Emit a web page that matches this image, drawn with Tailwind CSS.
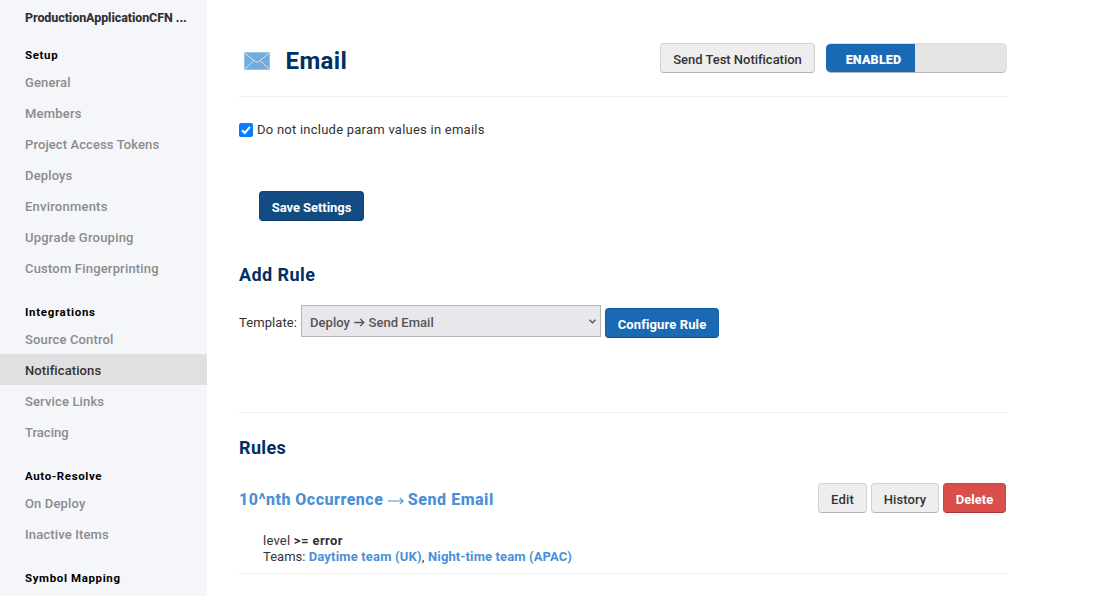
<!DOCTYPE html>
<html lang="en">
<head>
<meta charset="utf-8">
<title>Email notifications</title>
<script src="https://cdn.jsdelivr.net/npm/@tailwindcss/browser@4"></script>
</head>
<body class="flex h-[596px] overflow-hidden bg-white font-['Roboto','Liberation_Sans',sans-serif] text-[13px] text-[#333]">
<aside class="w-[207px] shrink-0 bg-[#f5f6fa] whitespace-nowrap font-medium tracking-[0.14px] text-[#8b8b8b]">
  <div class="h-[26px] pt-[10px] pl-[25px] text-[12.5px] leading-4 font-extrabold tracking-[-0.08px] text-[#333]">ProductionApplicationCFN ...</div>
  <h3 class="h-10 pt-[21px] pl-[25px] text-[11.5px] leading-4 font-bold tracking-[0.64px] text-black">Setup</h3>
  <a class="block h-[31px] pt-px pl-[25px] leading-[31px]">General</a>
  <a class="block h-[31px] pt-px pl-[25px] leading-[31px] tracking-[0.2px]">Members</a>
  <a class="block h-[31px] pt-px pl-[25px] leading-[31px] tracking-[0.1px]">Project Access Tokens</a>
  <a class="block h-[31px] pt-px pl-[25px] leading-[31px]">Deploys</a>
  <a class="block h-[31px] pt-px pl-[25px] leading-[31px] tracking-[0.22px]">Environments</a>
  <a class="block h-[31px] pt-px pl-[25px] leading-[31px] tracking-[0.22px]">Upgrade Grouping</a>
  <a class="block h-[31px] pt-px pl-[25px] leading-[31px] tracking-[0.19px]">Custom Fingerprinting</a>
  <h3 class="h-10 pt-[21px] pl-[25px] text-[11.5px] leading-4 font-bold tracking-[0.68px] text-black">Integrations</h3>
  <a class="block h-[31px] pt-px pl-[25px] leading-[31px]">Source Control</a>
  <a class="block h-[31px] bg-[#e0e0e0] pt-px pl-[25px] leading-[31px] tracking-[0.1px] text-[#333]">Notifications</a>
  <a class="block h-[31px] pt-px pl-[25px] leading-[31px]">Service Links</a>
  <a class="block h-[31px] pt-px pl-[25px] leading-[31px] tracking-[0px]">Tracing</a>
  <h3 class="h-10 pt-[21px] pl-[25px] text-[11.5px] leading-4 font-bold tracking-[0.6px] text-black">Auto-Resolve</h3>
  <a class="block h-[31px] pt-px pl-[25px] leading-[31px]">On Deploy</a>
  <a class="block h-[31px] pt-px pl-[25px] leading-[31px]">Inactive Items</a>
  <h3 class="h-10 pt-[21px] pl-[25px] text-[11.5px] leading-4 font-bold tracking-[0.62px] text-black">Symbol Mapping</h3>
</aside>
<main class="ml-8 w-[768px] whitespace-nowrap">
  <header class="flex h-[97px] items-start border-b border-[#eee] pt-[43px]">
    <svg class="mt-[9px] ml-[5px] h-[18px] w-[26px] shrink-0" viewBox="0 0 26 18" fill="none">
      <rect width="26" height="18" rx="1.2" fill="#72acdc"/>
      <path d="M.5 .8 11.3 9.6Q13 11 14.7 9.6L25.5 .8M.7 17.2 9.8 8.6M25.3 17.2 16.2 8.6" stroke="#d3e6f5" stroke-width="1"/>
      <rect x=".5" y=".5" width="25" height="17" rx="1" stroke="#a5cbea" stroke-width=".8"/>
    </svg>
    <h1 class="ml-[15.5px] text-[24px] leading-9 font-bold tracking-[0.4px] text-[#003064]">Email</h1>
    <button class="ml-auto h-[30px] w-[155px] rounded-[4px] border border-[#d2d2d2] border-b-[#b3b3b3] bg-[#eee] pt-[3px] text-[13px] leading-[25px] font-medium tracking-[-0.02px]">Send Test Notification</button>
    <div class="ml-[11px] flex h-[30px] w-[181px] overflow-hidden rounded-[5px] border border-l-0 border-[#e0e0e0] border-b-[#b8b8b8] bg-[#e5e5e5]">
      <div class="w-[89px] bg-[#1a69b5] pt-[3px] pl-[6px] text-center text-[12.5px] leading-[26px] font-black tracking-[0.2px] text-white">ENABLED</div>
    </div>
  </header>
  <label class="mt-[25px] flex h-4 items-center">
    <svg class="h-[14px] w-[14px]" viewBox="0 0 14 14"><rect width="14" height="14" rx="2" fill="#0a7aff"/><path d="M3 7.2 5.7 10 11 4" fill="none" stroke="#fff" stroke-width="2"/></svg>
    <span class="ml-1 leading-4 tracking-[0.24px]">Do not include param values in emails</span>
  </label>
  <button class="mt-[53px] ml-5 block h-[30px] w-[105px] rounded-[4px] border border-[#10467a] border-b-[#0d3a66] bg-[#134c83] pt-[3px] leading-[25px] font-bold tracking-[-0.05px] text-white">Save Settings</button>
  <h2 class="mt-[42px] text-[18px] leading-6 font-bold tracking-[0.42px] text-[#003064]">Add Rule</h2>
  <div class="mt-[18px] flex h-[33px] items-start">
    <span class="mt-[10px] w-[62px] leading-4 tracking-[0.08px]">Template:</span>
    <div class="flex h-8 w-[300px] items-center justify-between border border-[#b5b5b8] bg-[#e8e7ec] pr-1 pl-2 text-[#555]">
      <span class="flex items-center pt-[3px] leading-4 font-medium tracking-[0.04px]">Deploy<svg class="mr-[3.5px] ml-[4px] h-[9px] w-[11px]" viewBox="0 0 11 9" fill="none" stroke="#555" stroke-width="1.3"><path d="M.3 4.5H9.8M6.2.9 9.8 4.5 6.2 8.1"/></svg>Send Email</span>
      <svg class="h-[5px] w-[7px]" viewBox="0 0 7 5" fill="none" stroke="#555" stroke-width="1.4"><path d="M.5.7 3.5 3.8 6.5.7"/></svg>
    </div>
    <button class="mt-[3px] ml-1 h-[30px] w-[114px] shrink-0 rounded-[4px] border border-[#185fa4] border-b-[#134c83] bg-[#1a69b5] pt-[3px] leading-[25px] font-bold tracking-[0.12px] text-white">Configure Rule</button>
  </div>
  <hr class="mt-[74px] border-[#eee]">
  <h2 class="mt-[23px] text-[18px] leading-6 font-bold tracking-[0.35px] text-[#003064]">Rules</h2>
  <section class="mt-[23px] flex h-[91px] flex-col border-b border-[#eee]">
    <div class="flex h-[30px] items-start">
      <h3 class="flex items-center pt-[5px] text-[16px] leading-6 font-extrabold tracking-[0.48px] text-[#4a8fd8]">10^nth Occurrence<svg class="mr-[4px] ml-[4.5px] mt-[2px] h-[8px] w-[16px]" viewBox="0 0 16 8" fill="none" stroke="#4a8fd8" stroke-width="1.2"><path d="M0 4H15M11.8.8 15 4 11.8 7.2"/></svg><span class="tracking-[0.55px]">Send Email</span></h3>
      <div class="mr-px ml-auto flex gap-1">
        <button class="h-[30px] w-[49px] rounded-[4px] border border-[#d2d2d2] border-b-[#b3b3b3] bg-[#eee] pt-[3px] leading-[25px] font-medium tracking-[0.2px]">Edit</button>
        <button class="h-[30px] w-[68px] rounded-[4px] border border-[#d2d2d2] border-b-[#b3b3b3] bg-[#eee] pt-[3px] leading-[25px] font-medium tracking-[0.1px]">History</button>
        <button class="h-[30px] w-[63px] rounded-[4px] border border-[#c94542] border-b-[#a93835] bg-[#da4f4b] pt-[3px] leading-[25px] font-bold text-white">Delete</button>
      </div>
    </div>
    <div class="mt-5 pl-6 leading-4">
      <p class="tracking-[0.42px]"><span class="tracking-[0.22px]">level </span><b>&gt;= error</b></p>
      <p><span class="tracking-[0.02px]">Teams: </span><b class="tracking-[0.17px] text-[#4a8fd8]">Daytime team (UK)</b><span class="tracking-[0.3px]">, </span><b class="tracking-[0.12px] text-[#4a8fd8]">Night-time team (APAC)</b></p>
    </div>
  </section>
</main>
</body>
</html>
